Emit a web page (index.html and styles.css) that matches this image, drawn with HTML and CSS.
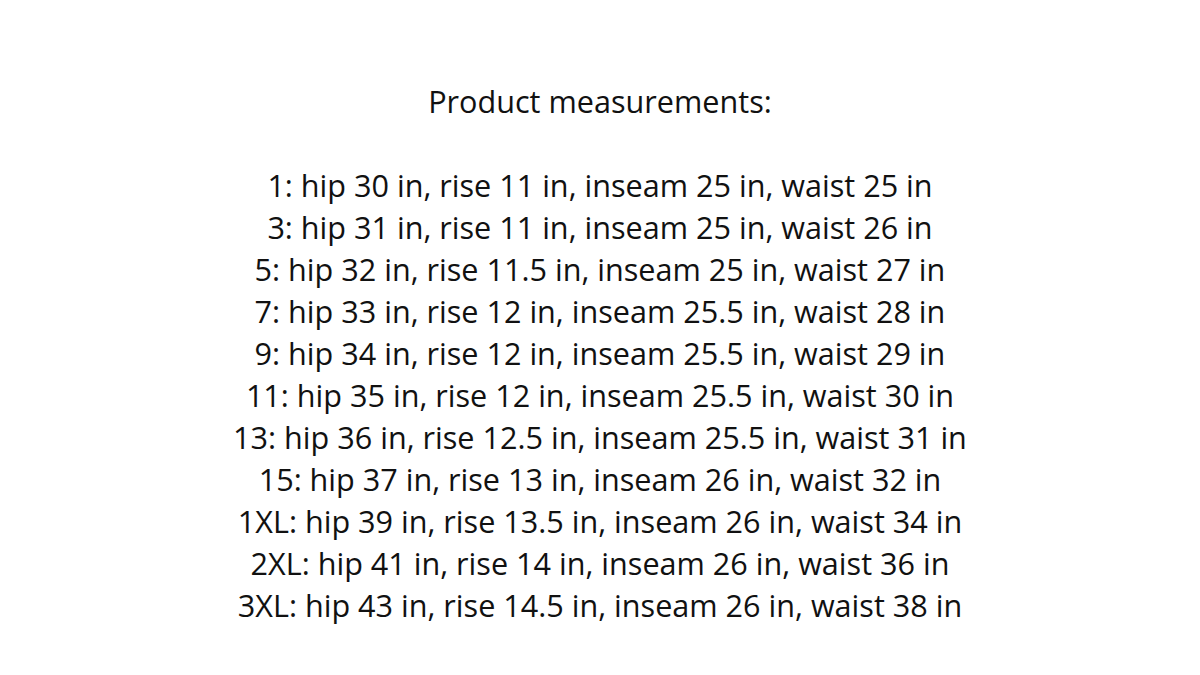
FILE: index.html
```html
<!DOCTYPE html>
<html>
<head>
<meta charset="utf-8">
<link rel="stylesheet" href="styles.css">
</head>
<body>
<div class="page">
  <div class="text">
    <p class="line">Product measurements:</p>
    <p class="line blank">&nbsp;</p>
    <p class="line">1: hip 30 in, rise 11 in, inseam 25 in, waist 25 in</p>
    <p class="line">3: hip 31 in, rise 11 in, inseam 25 in, waist 26 in</p>
    <p class="line">5: hip 32 in, rise 11.5 in, inseam 25 in, waist 27 in</p>
    <p class="line">7: hip 33 in, rise 12 in, inseam 25.5 in, waist 28 in</p>
    <p class="line">9: hip 34 in, rise 12 in, inseam 25.5 in, waist 29 in</p>
    <p class="line">11: hip 35 in, rise 12 in, inseam 25.5 in, waist 30 in</p>
    <p class="line">13: hip 36 in, rise 12.5 in, inseam 25.5 in, waist 31 in</p>
    <p class="line">15: hip 37 in, rise 13 in, inseam 26 in, waist 32 in</p>
    <p class="line">1XL: hip 39 in, rise 13.5 in, inseam 26 in, waist 34 in</p>
    <p class="line">2XL: hip 41 in, rise 14 in, inseam 26 in, waist 36 in</p>
    <p class="line">3XL: hip 43 in, rise 14.5 in, inseam 26 in, waist 38 in</p>
  </div>
</div>
</body>
</html>
```

FILE: styles.css
```css
html, body {
  margin: 0;
  padding: 0;
  background: #ffffff;
}
.page {
  width: 1200px;
  height: 675px;
  padding-top: 80px;
  box-sizing: border-box;
  display: flex;
  justify-content: center;
}
.text {
  font-family: "Open Sans", "Noto Sans", sans-serif;
  font-size: 30.6px;
  line-height: 42px;
  color: #111111;
  text-align: center;
}
.line {
  margin: 0;
  white-space: nowrap;
}
```
